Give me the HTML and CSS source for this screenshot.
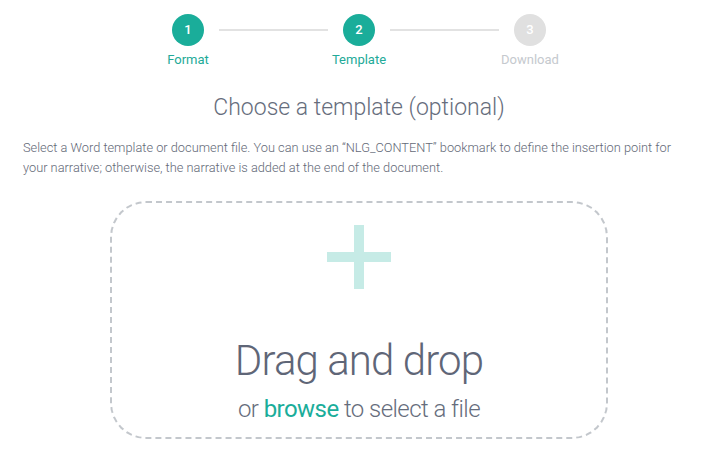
FILE: index.html
```html
<!DOCTYPE html>
<html lang="en">
<head>
    <meta charset="UTF-8">
    <meta name="viewport" content="width=device-width, initial-scale=1.0">
    <title>Choose a template</title>
    <link rel="stylesheet" href="styles.css">
</head>
<body>

    <div class="wizard">
        <!-- Steps -->
        <div class="steps">
            <div class="step done">
                <div class="step-circle">1</div>
                <div class="step-label">Format</div>
            </div>
            <div class="step-line"></div>
            <div class="step done">
                <div class="step-circle">2</div>
                <div class="step-label">Template</div>
            </div>
            <div class="step-line"></div>
            <div class="step">
                <div class="step-circle">3</div>
                <div class="step-label">Download</div>
            </div>
        </div>

        <h2 class="title">Choose a template (optional)</h2>

        <p class="intro">Select a Word template or document file. You can use an &ldquo;NLG_CONTENT&rdquo; bookmark to define the insertion point for your narrative; otherwise, the narrative is added at the end of the document.</p>

        <!-- Drop zone -->
        <div class="dropzone">
            <svg class="dropzone-plus" width="64" height="64" viewBox="0 0 64 64">
                <rect x="27" y="0" width="10" height="64" fill="#c6ebe6"/>
                <rect x="0" y="27" width="64" height="10" fill="#c6ebe6"/>
            </svg>
            <div class="dropzone-title">Drag and drop</div>
            <div class="dropzone-sub">or <a href="#" class="browse">browse</a> to select a file</div>
        </div>
    </div>

</body>
</html>
```

FILE: styles.css
```css
body {
    margin: 0;
    font-family: Roboto, "Liberation Sans", sans-serif;
    background-color: #fff;
    color: #656c7b;
}

.wizard {
    padding: 14px 20px 0 23px;
}

/* Steps */
.steps {
    display: flex;
    justify-content: center;
}

.step {
    width: 32px;
    display: flex;
    flex-direction: column;
    align-items: center;
}

.step-circle {
    width: 32px;
    height: 32px;
    border-radius: 50%;
    background-color: #e0e0e0;
    color: #fff;
    font-size: 13px;
    font-weight: 500;
    line-height: 32px;
    text-align: center;
}

.step-label {
    margin-top: 6px;
    font-size: 13px;
    line-height: 16px;
    white-space: nowrap;
    color: #c5c9ce;
}

.step.done .step-circle {
    background-color: #1aad9a;
}

.step.done .step-label {
    color: #22aa98;
}

.step-line {
    width: 109px;
    height: 2px;
    margin: 15px 15px 0;
    background-color: #e2e2e2;
}

.title {
    margin: 26px 0 0;
    font-size: 23px;
    font-weight: 300;
    line-height: 28px;
    text-align: center;
    color: #666d7c;
}

.intro {
    margin: 16px 0 0;
    font-size: 12.8px;
    font-weight: 300;
    line-height: 20px;
    color: #636977;
}

/* Drop zone */
.dropzone {
    box-sizing: border-box;
    width: 498px;
    height: 238px;
    margin: 23px auto 0;
    padding-top: 22px;
    border: 2px dashed #c3c7cc;
    border-radius: 36px;
    display: flex;
    flex-direction: column;
    align-items: center;
}

.dropzone-title {
    margin-top: 47px;
    font-size: 42px;
    font-weight: 300;
    line-height: 50px;
    letter-spacing: -0.9px;
    color: #5f6677;
}

.dropzone-sub {
    margin-top: 9px;
    font-size: 24px;
    font-weight: 300;
    line-height: 29px;
    letter-spacing: -0.55px;
    color: #666d7c;
}

.browse {
    color: #1aad9a;
    font-weight: 400;
    text-decoration: none;
}
```
